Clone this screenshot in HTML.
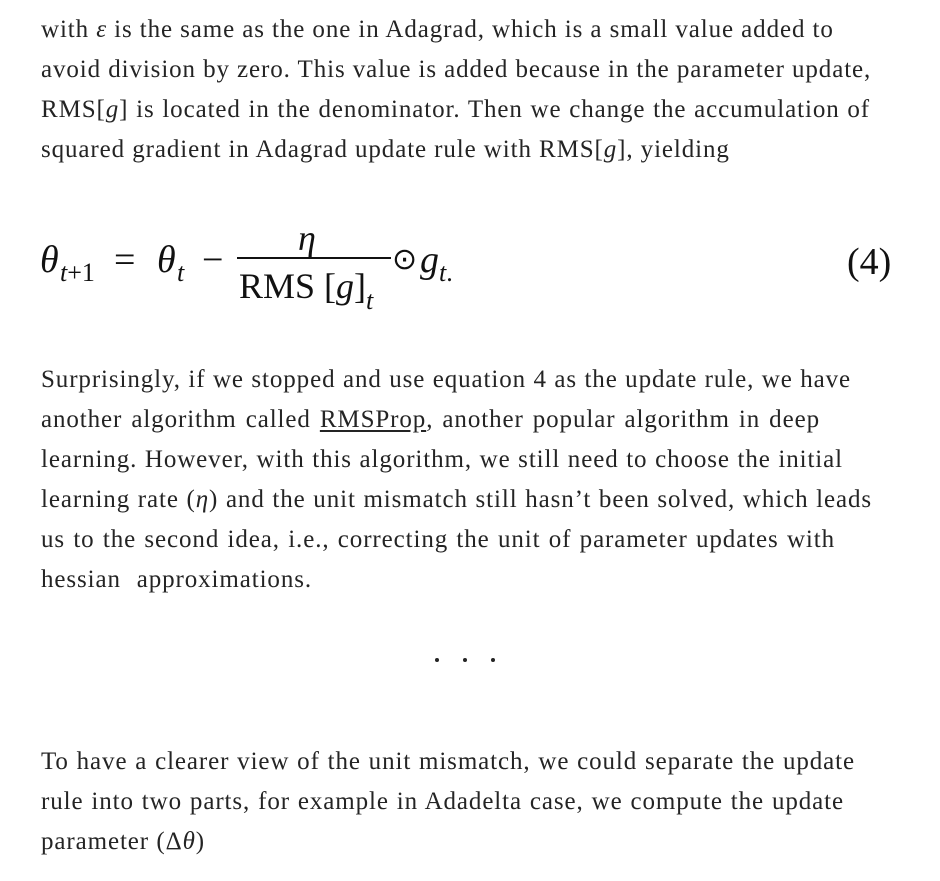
<!DOCTYPE html>
<html><head><meta charset="utf-8"><style>
html,body{margin:0;padding:0;background:#fff;width:940px;height:881px;overflow:hidden}
body{position:relative;font-family:"Liberation Serif","DejaVu Serif",serif;color:#242424}
.l{position:absolute;left:41px;height:40px;line-height:40px;font-size:25px;letter-spacing:0.9px;white-space:nowrap;text-align:justify;text-align-last:justify}
.m{position:absolute;font-family:"Liberation Serif",serif;color:#111;white-space:nowrap}
.i{font-style:italic}
u{text-decoration:underline;text-underline-offset:3px}
.dot{position:absolute;width:4px;height:4px;border-radius:2px;background:#242424;top:658px}
</style></head><body>
<div class="l" style="top:10px;width:792px">with <i>ε</i> is the same as the one in Adagrad, which is a small value added to</div>
<div class="l" style="top:50px;width:827px">avoid division by zero. This value is added because in the parameter update,</div>
<div class="l" style="top:90px;width:829px">RMS[<i>g</i>] is located in the denominator. Then we change the accumulation of</div>
<div class="l" style="top:130px;width:687px">squared gradient in Adagrad update rule with RMS[<i>g</i>], yielding</div>

<div class="m i" style="left:40px;top:240px;font-size:38px;line-height:40px">θ</div>
<div class="m i" style="left:60px;top:258px;font-size:26px;line-height:30px">t<span style="font-style:normal">+1</span></div>
<div class="m" style="left:114px;top:240px;font-size:38px;line-height:40px">=</div>
<div class="m i" style="left:157px;top:240px;font-size:38px;line-height:40px">θ</div>
<div class="m i" style="left:177px;top:258px;font-size:26px;line-height:30px">t</div>
<div class="m" style="left:202px;top:240px;font-size:38px;line-height:40px">−</div>
<div class="m i" style="left:298px;top:218px;font-size:36px;line-height:40px">η</div>
<div style="position:absolute;left:237px;top:257px;width:154px;height:2px;background:#111"></div>
<div class="m" style="left:239px;top:266px;font-size:36px;line-height:40px">RMS [<i>g</i>]</div>
<div class="m i" style="left:366px;top:286px;font-size:26px;line-height:30px">t</div>
<div class="m" style="left:392px;top:240px;font-size:30px;line-height:40px">⊙</div>
<div class="m i" style="left:420px;top:240px;font-size:38px;line-height:40px">g</div>
<div class="m i" style="left:439px;top:258px;font-size:26px;line-height:30px">t<span style="font-style:normal">.</span></div>
<div class="m" style="left:847px;top:242px;font-size:38px;line-height:40px">(4)</div>

<div class="l" style="top:360px;width:810px">Surprisingly, if we stopped and use equation 4 as the update rule, we have</div>
<div class="l" style="top:400px;width:779px">another algorithm called <u>RMSProp</u>, another popular algorithm in deep</div>
<div class="l" style="top:440px;width:802px">learning. However, with this algorithm, we still need to choose the initial</div>
<div class="l" style="top:480px;width:831px">learning rate (<i>η</i>) and the unit mismatch still hasn’t been solved, which leads</div>
<div class="l" style="top:520px;width:794px">us to the second idea, i.e., correcting the unit of parameter updates with</div>
<div class="l" style="top:560px;width:271px">hessian approximations.</div>

<div class="dot" style="left:435px"></div>
<div class="dot" style="left:463px"></div>
<div class="dot" style="left:491px"></div>

<div class="l" style="top:742px;width:814px">To have a clearer view of the unit mismatch, we could separate the update</div>
<div class="l" style="top:782px;width:803px">rule into two parts, for example in Adadelta case, we compute the update</div>
<div class="l" style="top:822px;width:164px">parameter (Δ<i>θ</i>)</div>
</body></html>
